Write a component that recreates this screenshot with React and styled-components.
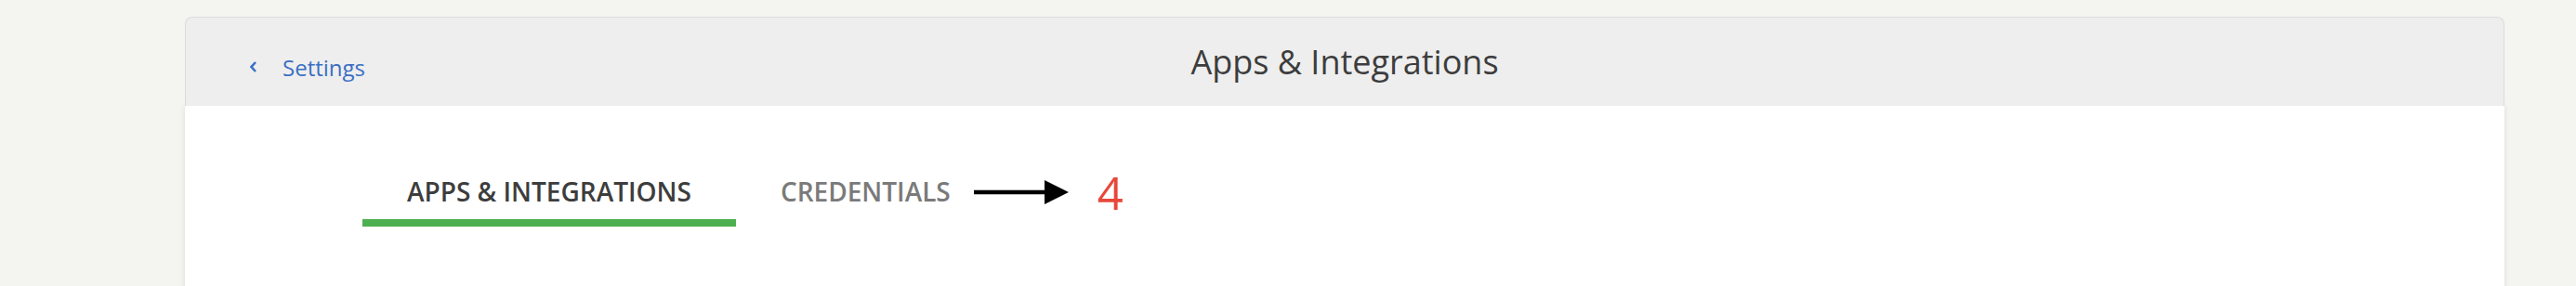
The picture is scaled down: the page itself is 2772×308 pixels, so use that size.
import React from 'react';
import styled, { createGlobalStyle } from 'styled-components';

const GlobalStyle = createGlobalStyle`
  body {
    margin: 0;
    background: #f4f4f0;
    font-family: "Open Sans", "Noto Sans", sans-serif;
  }
`;

const Page = styled.div`
  height: 308px;
  padding: 18px 0 0 199px;
  box-sizing: border-box;
  overflow: hidden;
`;

const Card = styled.div`
  width: 2496px;
  display: flex;
  flex-direction: column;
`;

const Header = styled.header`
  position: relative;
  z-index: 1;
  height: 96px;
  box-sizing: border-box;
  background: #eeeeee;
  border: 1px solid #dcdcdc;
  border-bottom: none;
  border-radius: 8px 8px 0 0;
  display: grid;
  grid-template-columns: 1fr auto 1fr;
  align-items: center;
  padding: 0 68px;
`;

const BackLink = styled.a`
  display: flex;
  align-items: center;
  gap: 26px;
  color: #3b6fc4;
  font-size: 24px;
  text-decoration: none;
  padding-top: 11px;
`;

const Title = styled.h1`
  margin: 0;
  font-size: 36px;
  font-weight: 400;
  color: #3d3d3d;
`;

const Body = styled.main`
  background: #ffffff;
  height: 200px;
  box-shadow: 0 0 6px rgba(0, 0, 0, 0.1);
  padding: 0 0 0 191px;
`;

const TabRow = styled.nav`
  display: flex;
  align-items: center;
  padding-top: 62px;
`;

const Tab = styled.div`
  padding: 0 48px;
  height: 68px;
  box-sizing: border-box;
  display: flex;
  align-items: center;
  font-size: 28px;
  font-weight: 600;
  color: ${p => (p.$active ? '#3d3d3d' : '#7a7a7a')};
  border-bottom: 8px solid ${p => (p.$active ? '#4caf50' : 'transparent')};
`;

const Note = styled.div`
  display: flex;
  align-items: center;
  gap: 31px;
  margin-left: -23px;
  margin-bottom: 6px;
`;

const Count = styled.span`
  font-size: 49px;
  font-weight: 400;
  color: #e8473b;
  line-height: 1;
`;

function App() {
  return (
    <>
      <GlobalStyle />
      <Page>
        <Card>
          <Header>
            <BackLink href="#">
              <svg width="10" height="14" viewBox="0 0 10 14">
                <path d="M7 2 L2.5 7 L7 12" fill="none" stroke="#3b6fc4" strokeWidth="2.6" />
              </svg>
              Settings
            </BackLink>
            <Title>Apps &amp; Integrations</Title>
            <div />
          </Header>
          <Body>
            <TabRow>
              <Tab $active>APPS &amp; INTEGRATIONS</Tab>
              <Tab>CREDENTIALS</Tab>
              <Note>
                <svg width="102" height="26" viewBox="0 0 102 26">
                  <path d="M0 13 H78" stroke="#000" strokeWidth="4.5" />
                  <path d="M76 0 L102 13 L76 26 Z" fill="#000" />
                </svg>
                <Count>4</Count>
              </Note>
            </TabRow>
          </Body>
        </Card>
      </Page>
    </>
  );
}

export default App;
